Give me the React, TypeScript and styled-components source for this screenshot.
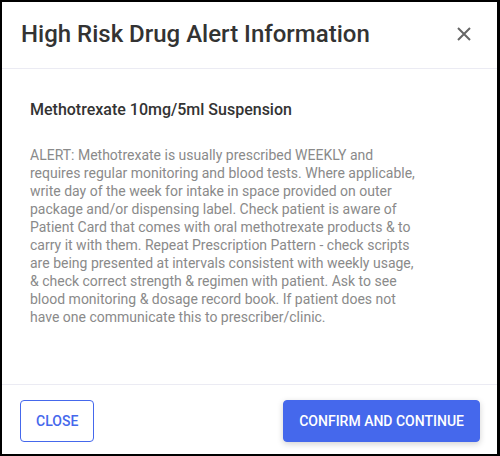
import styled, { createGlobalStyle } from 'styled-components';

const GlobalStyle = createGlobalStyle`
  html, body {
    margin: 0;
    padding: 0;
    background: #ffffff;
  }
  * {
    box-sizing: border-box;
  }
`;

const Frame = styled.div`
  width: 500px;
  height: 456px;
  display: flex;
  flex-direction: column;
  background: #ffffff;
  border-style: solid;
  border-color: #000000;
  border-width: 2px 3px 2px 2px;
  font-family: Roboto, 'Liberation Sans', sans-serif;
`;

const Header = styled.header`
  height: 67px;
  display: flex;
  align-items: center;
  justify-content: space-between;
  padding: 0 22px 2px 19px;
  border-bottom: 1px solid #ebebf3;
`;

const Title = styled.h2`
  margin: 0;
  font-size: 24px;
  font-weight: 500;
  color: #333333;
`;

const CloseIcon = styled.button`
  width: 22px;
  height: 22px;
  padding: 0;
  border: none;
  background: none;
  display: flex;
  align-items: center;
  justify-content: center;
  cursor: pointer;
`;

const Body = styled.main`
  flex: 1;
  padding: 31px 0 0 28px;
`;

const DrugName = styled.h3`
  margin: 0 0 27px;
  font-size: 16px;
  line-height: 19px;
  font-weight: 500;
  color: #333333;
`;

const AlertText = styled.p`
  width: 392px;
  margin: 0;
  font-size: 14px;
  line-height: 18px;
  color: #8a8a8a;
`;

const Footer = styled.footer`
  display: flex;
  justify-content: space-between;
  align-items: center;
  padding: 15px 17px 12px 18px;
  border-top: 1px solid #ebebf3;
`;

const Button = styled.button<{ primary?: boolean }>`
  height: 42px;
  padding: 0 15px;
  border-radius: 4px;
  font-family: Roboto, 'Liberation Sans', sans-serif;
  font-size: 14px;
  font-weight: 500;
  text-transform: uppercase;
  cursor: pointer;
  border: 1px solid #4568ec;
  color: ${(p) => (p.primary ? '#ffffff' : '#4568ec')};
  background: ${(p) => (p.primary ? '#4568ec' : '#ffffff')};
  box-shadow: ${(p) => (p.primary ? '0 2px 6px rgba(0, 0, 0, 0.18)' : 'none')};
`;

const ALERT =
  'ALERT: Methotrexate is usually prescribed WEEKLY and requires regular monitoring and blood tests. Where applicable, write day of the week for intake in space provided on outer package and/or dispensing label. Check patient is aware of Patient Card that comes with oral methotrexate products & to carry it with them. Repeat Prescription Pattern - check scripts are being presented at intervals consistent with weekly usage, & check correct strength & regimen with patient. Ask to see blood monitoring & dosage record book. If patient does not have one communicate this to prescriber/clinic.';

function App() {
  return (
    <>
      <GlobalStyle />
      <Frame>
        <Header>
          <Title>High Risk Drug Alert Information</Title>
          <CloseIcon aria-label="Close">
            <svg width="14" height="14" viewBox="0 0 14 14">
              <path d="M1 1L13 13M13 1L1 13" stroke="#666666" strokeWidth="2" />
            </svg>
          </CloseIcon>
        </Header>
        <Body>
          <DrugName>Methotrexate 10mg/5ml Suspension</DrugName>
          <AlertText>{ALERT}</AlertText>
        </Body>
        <Footer>
          <Button>Close</Button>
          <Button primary>Confirm and continue</Button>
        </Footer>
      </Frame>
    </>
  );
}

export default App;
